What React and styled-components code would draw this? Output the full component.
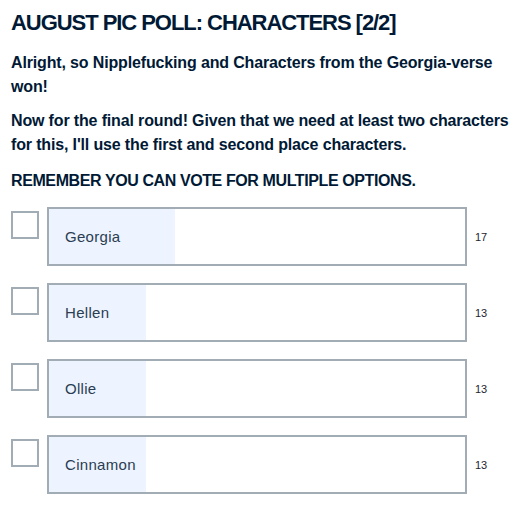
import React from "react";
import styled, { createGlobalStyle } from "styled-components";

const GlobalStyle = createGlobalStyle`
  body {
    margin: 0;
    background: #ffffff;
    font-family: "Liberation Sans", Arial, sans-serif;
    color: #001935;
  }
`;

const Post = styled.div`
  padding: 9px 4px 0 11px;
  width: 530px;
  box-sizing: border-box;
`;

const Title = styled.h1`
  margin: 0 0 14px 0;
  font-size: 22px;
  line-height: 28px;
  font-weight: 700;
  letter-spacing: -1.05px;
`;

const Paragraph = styled.p`
  margin: 0 0 ${(p) => p.$gap || 10}px 0;
  font-size: 16px;
  line-height: 24px;
  font-weight: 700;
  letter-spacing: ${(p) => (p.$caps ? "-0.4px" : "-0.15px")};
`;

const Options = styled.div`
  display: flex;
  flex-direction: column;
  gap: 17px;
  margin-top: 14px;
`;

const Row = styled.div`
  display: flex;
  align-items: flex-start;
`;

const Checkbox = styled.div`
  width: 28px;
  height: 28px;
  box-sizing: border-box;
  border: 2px solid #a2acb4;
  margin-top: 4px;
  flex: none;
`;

const Bar = styled.div`
  position: relative;
  margin-left: 8px;
  width: 420px;
  height: 59px;
  box-sizing: border-box;
  border: 2px solid #a2acb4;
  display: flex;
  align-items: center;
  flex: none;
`;

const Fill = styled.div`
  position: absolute;
  left: 0;
  top: 0;
  bottom: 0;
  background: #edf4ff;
`;

const Label = styled.span`
  position: relative;
  padding-left: 16px;
  font-size: 15px;
  color: #2a3d52;
  letter-spacing: 0.3px;
`;

const Count = styled.span`
  margin-left: 8px;
  align-self: center;
  font-size: 11px;
  color: #1c2530;
`;

const options = [
  { label: "Georgia", votes: 17 },
  { label: "Hellen", votes: 13 },
  { label: "Ollie", votes: 13 },
  { label: "Cinnamon", votes: 13 },
];

const total = options.reduce((s, o) => s + o.votes, 0);

export default function App() {
  return (
    <>
      <GlobalStyle />
      <Post>
        <Title>AUGUST PIC POLL: CHARACTERS [2/2]</Title>
        <Paragraph>
          Alright, so Nipplefucking and Characters from the Georgia-verse won!
        </Paragraph>
        <Paragraph $gap={12}>
          Now for the final round! Given that we need at least two characters
          for this, I'll use the first and second place characters.
        </Paragraph>
        <Paragraph $caps $gap={0}>
          REMEMBER YOU CAN VOTE FOR MULTIPLE OPTIONS.
        </Paragraph>
        <Options>
          {options.map((o) => (
            <Row key={o.label}>
              <Checkbox />
              <Bar>
                <Fill style={{ width: `${(o.votes / total) * 100}%` }} />
                <Label>{o.label}</Label>
              </Bar>
              <Count>{o.votes}</Count>
            </Row>
          ))}
        </Options>
      </Post>
    </>
  );
}
